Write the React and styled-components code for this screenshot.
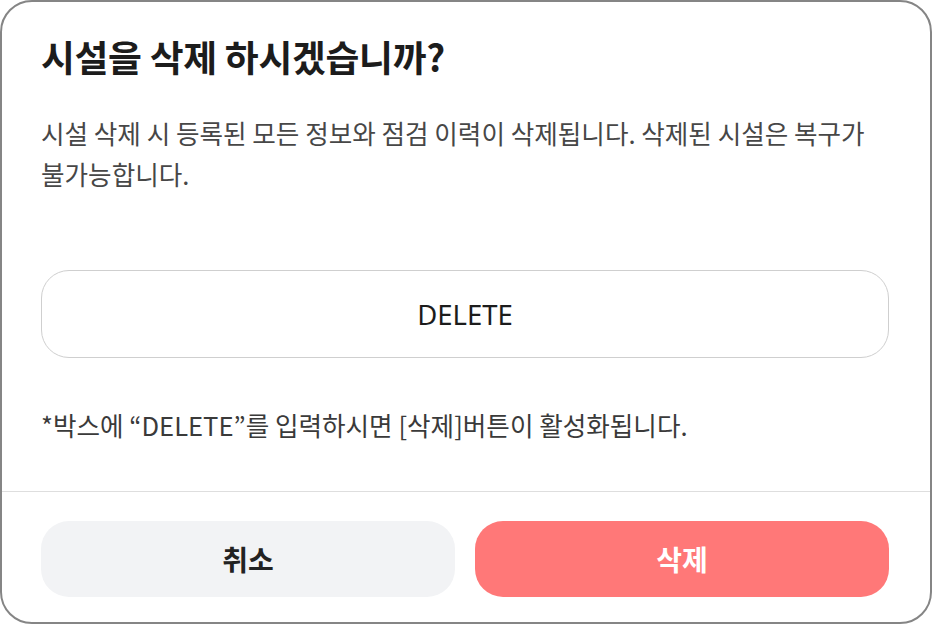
import React, { useState } from "react";
import styled, { createGlobalStyle } from "styled-components";

const Global = createGlobalStyle`
  html, body { margin: 0; padding: 0; background: #ffffff; }
  * { box-sizing: border-box; }
  body { font-family: "Noto Sans CJK KR", "Noto Sans", sans-serif; }
`;

const Modal = styled.div`
  width: 932px;
  height: 624px;
  border: 2px solid #858585;
  border-radius: 32px;
  background: #ffffff;
  display: flex;
  flex-direction: column;
  overflow: hidden;
`;

const Body = styled.div`
  padding: 32px 41px 0 39px;
  height: 489px;
  display: flex;
  flex-direction: column;
`;

const Title = styled.h2`
  margin: 0;
  font-size: 36.8px;
  line-height: 44px;
  font-weight: 700;
  color: #1c1c1c;
  letter-spacing: -0.3px;
  white-space: nowrap;
`;

const Description = styled.p`
  margin: 34px 0 0;
  font-size: 25.6px;
  line-height: 41px;
  color: #474747;
  white-space: nowrap;
`;

const Input = styled.input`
  margin-top: 76px;
  width: 100%;
  height: 88px;
  border: 1px solid #cfcfcf;
  border-radius: 28px;
  background: #fff;
  text-align: center;
  font-family: "Noto Sans", "Noto Sans CJK KR", sans-serif;
  font-size: 27.5px;
  color: #1c1c1c;
  outline: none;
`;

const Hint = styled.p`
  margin: 52px 0 0;
  font-size: 25.6px;
  line-height: 30px;
  color: #3a3a3a;
  white-space: nowrap;
`;

const Divider = styled.hr`
  margin: 0;
  border: 0;
  border-top: 1px solid #dedede;
`;

const Footer = styled.div`
  padding: 29px 41px 0 39px;
  display: grid;
  grid-template-columns: 1fr 1fr;
  gap: 20px;
`;

const Button = styled.button`
  height: 76px;
  border: 0;
  border-radius: 28px;
  font-family: "Noto Sans CJK KR", "Noto Sans", sans-serif;
  font-size: 28px;
  font-weight: 700;
  background: ${(p) => (p.$danger ? "#ff7878" : "#f2f3f5")};
  color: ${(p) => (p.$danger ? "#ffffff" : "#222222")};
  cursor: pointer;
`;

export default function App() {
  const [value, setValue] = useState("DELETE");
  return (
    <>
      <Global />
      <Modal>
        <Body>
          <Title>시설을 삭제 하시겠습니까?</Title>
          <Description>
            시설 삭제 시 등록된 모든 정보와 점검 이력이 삭제됩니다. 삭제된 시설은 복구가
            <br />
            불가능합니다.
          </Description>
          <Input value={value} onChange={(e) => setValue(e.target.value)} />
          <Hint>*박스에 “DELETE”를 입력하시면 [삭제]버튼이 활성화됩니다.</Hint>
        </Body>
        <Divider />
        <Footer>
          <Button>취소</Button>
          <Button $danger>삭제</Button>
        </Footer>
      </Modal>
    </>
  );
}
